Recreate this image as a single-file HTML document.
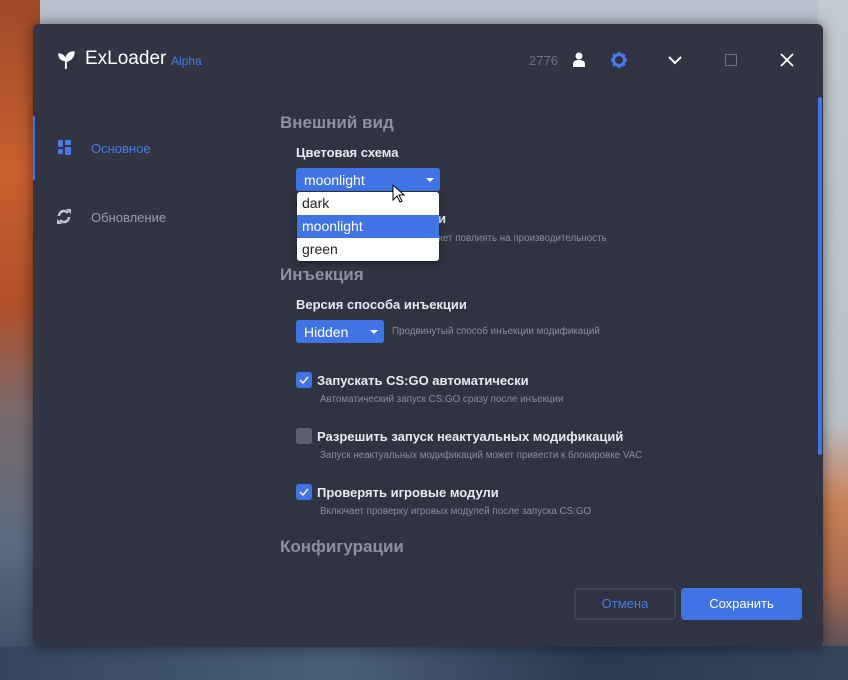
<!DOCTYPE html>
<html><head><meta charset="utf-8"><style>
*{margin:0;padding:0;box-sizing:border-box}
body{width:848px;height:680px;overflow:hidden;position:relative;font-family:"Liberation Sans","DejaVu Sans",sans-serif;
background:linear-gradient(180deg,#b9c2cc 0,#a9b4bf 40%,#8fa0b0 65%,#3d5068 88%,#2a3a52 100%)}
.l{position:absolute;left:0;top:0;width:40px;height:680px;background:linear-gradient(180deg,#a04a2a 0,#c8602f 25%,#b0502a 45%,#7a6a6a 60%,#5a6a80 80%,#3a4a62 100%)}
.r{position:absolute;right:0;top:0;width:30px;height:680px;background:linear-gradient(180deg,#c3cad2 0,#b9c0c8 62%,#c98055 74%,#a86a50 86%,#34465e 100%)}
.b{position:absolute;left:0;bottom:0;width:848px;height:34px;background:linear-gradient(90deg,#34465e,#4a5e78 40%,#2a3a50 70%,#34455c)}
.w{position:absolute;left:33px;top:24px;width:790px;height:623px;background:#313543;border-radius:6px;box-shadow:0 0 14px rgba(0,0,0,.5)}
.a{position:absolute;white-space:nowrap}
.content{position:absolute;left:222px;top:74px;width:560px;height:520px;background:#303442}
.dd{position:absolute;background:#4074e4;border-radius:3px;color:#fff;font-size:14px}
.cb{position:absolute;width:16px;height:16px;border-radius:3px;background:#4074e4}
.t{color:#e8eaf0;font-size:13px;font-weight:bold}
.s{color:#8a8f9c;font-size:9.8px}
h2{position:absolute;font-size:17px;color:#8d919c;font-weight:bold}
</style></head><body>
<div class="l"></div><div class="r"></div><div class="b"></div>
<div class="w">
 <div class="content"></div>
 <svg class="a" style="left:24px;top:26px" width="20" height="20" viewBox="0 0 18 18"><path d="M1 3c4 0 7 2 7 7C4 10 1 8 1 3z" fill="#fff"/><path d="M8 10c0-4 2-8 7-8 0 4-3 7-7 8zM8 9v8" stroke="#fff" stroke-width="1.8" fill="#fff"/></svg>
 <div class="a" style="left:52px;top:24px;font-size:19px;color:#fff">ExLoader</div>
 <div class="a" style="left:138px;top:30px;font-size:12px;color:#4a7ae6">Alpha</div>
 <div class="a" style="left:496px;top:29px;font-size:13px;color:#6d717c">2776</div>
 <svg class="a" style="left:539px;top:28px" width="14" height="15" viewBox="0 0 14 15"><circle cx="7" cy="4" r="3.5" fill="#fff"/><path d="M1 15v-3c0-3 3-4 6-4s6 1 6 4v3z" fill="#fff"/></svg>
 <svg class="a" style="left:578px;top:28px" width="16" height="16" viewBox="0 0 16 16"><circle cx="8" cy="8" r="5.5" fill="none" stroke="#4a7ae6" stroke-width="3"/><g stroke="#4a7ae6" stroke-width="3"><path d="M8 0v3M8 13v3M0 8h3M13 8h3M2.3 2.3l2 2M11.7 11.7l2 2M2.3 13.7l2-2M11.7 4.3l2-2"/></g><circle cx="8" cy="8" r="2" fill="#313543"/></svg>
 <svg class="a" style="left:634px;top:30px" width="16" height="12" viewBox="0 0 16 12"><path d="M2 3l6 6 6-6" stroke="#fff" stroke-width="2" fill="none"/></svg>
 <div class="a" style="left:692px;top:30px;width:12px;height:12px;border:1.5px solid #6d717c"></div>
 <svg class="a" style="left:746px;top:28px" width="16" height="16" viewBox="0 0 16 16"><path d="M2 2l12 12M14 2L2 14" stroke="#fff" stroke-width="1.8"/></svg>
 <div class="a" style="left:0;top:92px;width:2px;height:64px;background:#4074e4"></div>
 <svg class="a" style="left:25px;top:116px" width="13" height="16" viewBox="0 0 13 16"><rect x="0" y="0" width="5" height="7" rx="1" fill="#4a7ae6"/><rect x="7" y="0" width="6" height="5" rx="1" fill="#4a7ae6"/><rect x="0" y="9" width="5" height="5" rx="1" fill="#4a7ae6"/><rect x="7" y="7" width="6" height="8" rx="1" fill="#4a7ae6"/></svg>
 <div class="a" style="left:58px;top:117px;font-size:13px;color:#4a7ae6">Основное</div>
 <svg class="a" style="left:24px;top:185px" width="14" height="15" viewBox="0 0 14 15"><path d="M2 7a5 5 0 0 1 9-3M12 8a5 5 0 0 1-9 3" stroke="#c0c4cc" stroke-width="2.6" fill="none"/><path d="M9 0l5 0 0 5zM5 15l-5 0 0-5z" fill="#c0c4cc"/></svg>
 <div class="a" style="left:58px;top:186px;font-size:13px;color:#9a9ea8">Обновление</div>
 <div class="a" style="left:785px;top:73px;width:4px;height:358px;background:#4074e4;border-radius:2px"></div>

 <h2 style="left:247px;top:89px">Внешний вид</h2>
 <div class="a t" style="left:263px;top:121px">Цветовая схема</div>
 <div class="a s" style="left:398px;top:209px">ожет повлиять на производительность</div>
 <div class="a t" style="left:405px;top:187px">и</div>
 <div class="dd" style="left:263px;top:144px;width:144px;height:23px;padding:4px 8px">moonlight<span style="position:absolute;right:6px;top:10px;border:4px solid transparent;border-top:4px solid #fff"></span></div>
 <div class="a" style="left:264px;top:168px;width:142px;height:69px;box-shadow:0 2px 6px rgba(0,0,0,.4);border-radius:3px">
  <div style="height:23px;background:#fff;color:#222;font-size:14px;padding:3px 5px;border-radius:3px 3px 0 0">dark</div>
  <div style="height:23px;background:#4074e4;color:#fff;font-size:14px;padding:3px 5px">moonlight</div>
  <div style="height:23px;background:#fff;color:#222;font-size:14px;padding:3px 5px;border-radius:0 0 3px 3px">green</div>
 </div>
 <svg class="a" style="left:359px;top:160px" width="14" height="20" viewBox="0 0 14 20"><path d="M1 1v15l4-4 3 6 2-1-3-6h5z" fill="#fff" stroke="#000" stroke-width="1"/></svg>

 <h2 style="left:247px;top:241px">Инъекция</h2>
 <div class="a t" style="left:263px;top:273px">Версия способа инъекции</div>
 <div class="dd" style="left:263px;top:296px;width:88px;height:23px;padding:4px 8px">Hidden<span style="position:absolute;right:6px;top:10px;border:4px solid transparent;border-top:4px solid #fff"></span></div>
 <div class="a s" style="left:359px;top:302px">Продвинутый способ инъекции модификаций</div>

 <div class="cb" style="left:263px;top:348px"><svg width="16" height="16"><path d="M4 8l3 3 5-6" stroke="#fff" stroke-width="1.4" fill="none"/></svg></div>
 <div class="a t" style="left:284px;top:349px">Запускать CS:GO автоматически</div>
 <div class="a s" style="left:287px;top:370px">Автоматический запуск CS:GO сразу после инъекции</div>
 <div class="cb" style="left:263px;top:404px;background:#5d6273"></div>
 <div class="a t" style="left:284px;top:405px">Разрешить запуск неактуальных модификаций</div>
 <div class="a s" style="left:287px;top:426px">Запуск неактуальных модификаций может привести к блокировке VAC</div>
 <div class="cb" style="left:263px;top:460px"><svg width="16" height="16"><path d="M4 8l3 3 5-6" stroke="#fff" stroke-width="1.4" fill="none"/></svg></div>
 <div class="a t" style="left:284px;top:461px">Проверять игровые модули</div>
 <div class="a s" style="left:287px;top:482px">Включает проверку игровых модулей после запуска CS:GO</div>
 <h2 style="left:247px;top:513px">Конфигурации</h2>

 <div class="a" style="left:541px;top:564px;width:102px;height:32px;border:2px solid #414552;border-radius:4px;color:#4a7ae6;font-size:13px;text-align:center;line-height:28px">Отмена</div>
 <div class="a" style="left:648px;top:564px;width:121px;height:32px;background:#4074e4;border-radius:4px;color:#fff;font-size:13px;text-align:center;line-height:32px">Сохранить</div>
</div>
</body></html>
